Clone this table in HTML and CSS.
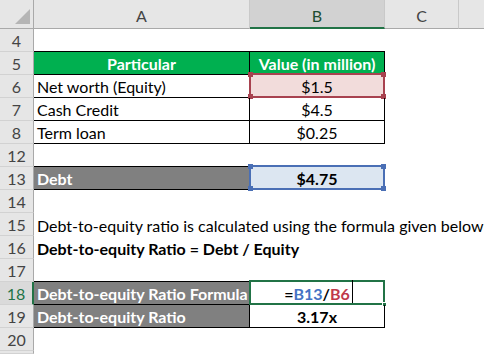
FILE: index.html
```html
<!DOCTYPE html>
<html>
<head>
<meta charset="utf-8">
<link rel="stylesheet" href="styles.css">
</head>
<body>
<div class="sheet">
  <div class="corner"><svg class="tri" width="16" height="16" viewBox="0 0 16 16"><polygon points="15,0 15,15 0,15" fill="#b5b5b5"/></svg></div>
  <div class="ch">A</div>
  <div class="ch ch-sel">B</div>
  <div class="ch">C</div>
  <div class="ch ch-rest"></div>

  <div class="rh">4</div><div class="c bb"></div><div class="c bb"></div><div class="c"></div><div class="c"></div>

  <div class="rh">5</div><div class="c t green center bold">Particular</div><div class="c t green center bold">Value (in million)</div><div class="c"></div><div class="c"></div>

  <div class="rh">6</div><div class="c t">Net worth (Equity)</div><div class="c t center pink"><span class="ref ref-red"><i class="h tl"></i><i class="h tr"></i><i class="h bl"></i><i class="h br"></i></span>$1.5</div><div class="c"></div><div class="c"></div>

  <div class="rh">7</div><div class="c t">Cash Credit</div><div class="c t center">$4.5</div><div class="c"></div><div class="c"></div>

  <div class="rh">8</div><div class="c t">Term loan</div><div class="c t center">$0.25</div><div class="c"></div><div class="c"></div>

  <div class="rh">12</div><div class="c bb"></div><div class="c bb"></div><div class="c"></div><div class="c"></div>

  <div class="rh">13</div><div class="c t gray bold">Debt</div><div class="c t center blue bold"><span class="ref ref-blue"><i class="h tl"></i><i class="h tr"></i><i class="h bl"></i><i class="h br"></i></span>$4.75</div><div class="c"></div><div class="c"></div>

  <div class="rh">14</div><div class="c"></div><div class="c"></div><div class="c"></div><div class="c"></div>

  <div class="rh">15</div><div class="c span">Debt-to-equity ratio is calculated using the formula given below</div>

  <div class="rh">16</div><div class="c span bold">Debt-to-equity Ratio = Debt / Equity</div>

  <div class="rh">17</div><div class="c bb"></div><div class="c bb"></div><div class="c"></div><div class="c"></div>

  <div class="rh rh-sel">18</div><div class="c t gray bold">Debt-to-equity Ratio Formula</div><div class="c t center bold active"><span class="formula">=<span class="f-blue">B13</span>/<span class="f-red">B6</span><span class="caret"></span></span><i class="fill"></i></div><div class="c"></div><div class="c"></div>

  <div class="rh">19</div><div class="c t gray bold">Debt-to-equity Ratio</div><div class="c t center bold">3.17x</div><div class="c"></div><div class="c"></div>

  <div class="rh">20</div><div class="c"></div><div class="c"></div><div class="c"></div><div class="c"></div>

  <div class="rh"></div><div class="c"></div><div class="c"></div><div class="c"></div><div class="c"></div>
</div>
</body>
</html>
```

FILE: styles.css
```css
* { box-sizing: border-box; margin: 0; padding: 0; }
html, body { width: 484px; height: 354px; overflow: hidden; background: #fff; }
body { font-family: "Lato", "Liberation Sans", sans-serif; font-size: 16px; color: #000; }

.sheet {
  display: grid;
  grid-template-columns: 34px 216px 135px 74px 1fr;
  grid-template-rows: 29px repeat(14, 23px) 1fr;
  width: 484px;
  height: 354px;
}

.corner {
  background: #e6e6e6;
  border-right: 1px solid #a9a9a9;
  border-bottom: 1px solid #a9a9a9;
  display: flex;
  align-items: flex-end;
  justify-content: flex-end;
  padding: 0 2px 3px 0;
}

.ch {
  background: #e6e6e6;
  border-right: 1px solid #c9c9c9;
  border-bottom: 1px solid #a9a9a9;
  color: #444;
  display: flex;
  align-items: center;
  justify-content: center;
  padding-top: 3px;
}
.ch-sel {
  background: #d2d2d2;
  border-bottom: 2px solid #217346;
  color: #1f4e33;
}
.ch-rest { border-right: none; }

.rh {
  background: #e6e6e6;
  border-right: 1px solid #a9a9a9;
  border-bottom: 1px solid #d2d2d2;
  color: #444;
  display: flex;
  align-items: center;
  justify-content: center;
  padding-top: 1px;
}
.rh-sel {
  background: #dadada;
  color: #217346;
  border-right: 2px solid #217346;
}

.c {
  position: relative;
  white-space: nowrap;
  display: flex;
  align-items: center;
  padding: 1px 0 0 3px;
}
.t {
  border-right: 1px solid #000;
  border-bottom: 1px solid #000;
}
.bb { border-bottom: 1px solid #000; }
.center { justify-content: center; padding-left: 0; }
.bold { font-weight: 700; }
.green { background: #00b050; color: #fff; }
.gray { background: #808080; color: #fff; }
.pink { background: #f2dcdb; }
.blue { background: #dce6f1; }
.span { grid-column: 2 / -1; overflow: visible; }

.ref {
  position: absolute;
  left: -1px;
  top: -2px;
  right: -1px;
  bottom: -1px;
  border: 2px solid;
}
.ref-red { border-color: #a8424f; }
.ref-blue { border-color: #4a6fb5; }
.h {
  position: absolute;
  width: 5px;
  height: 5px;
}
.ref-red .h { background: #a8424f; }
.ref-blue .h { background: #4a6fb5; }
.tl { left: -3px; top: -3px; }
.tr { right: -3px; top: -3px; }
.bl { left: -3px; bottom: -3px; }
.br { right: -3px; bottom: -3px; }

.active {
  outline: none;
}
.active::before {
  content: "";
  position: absolute;
  left: -1px;
  top: -2px;
  right: -1px;
  bottom: -1px;
  border: 2px solid #217346;
}
.fill {
  position: absolute;
  right: -3px;
  bottom: -3px;
  width: 5px;
  height: 5px;
  background: #217346;
  border: 1px solid #fff;
}
.formula { position: relative; }
.f-blue { color: #4472c4; }
.f-red { color: #c0394b; }
.caret {
  position: absolute;
  right: -3px;
  top: -4px;
  width: 1px;
  height: 23px;
  background: #000;
}
```
